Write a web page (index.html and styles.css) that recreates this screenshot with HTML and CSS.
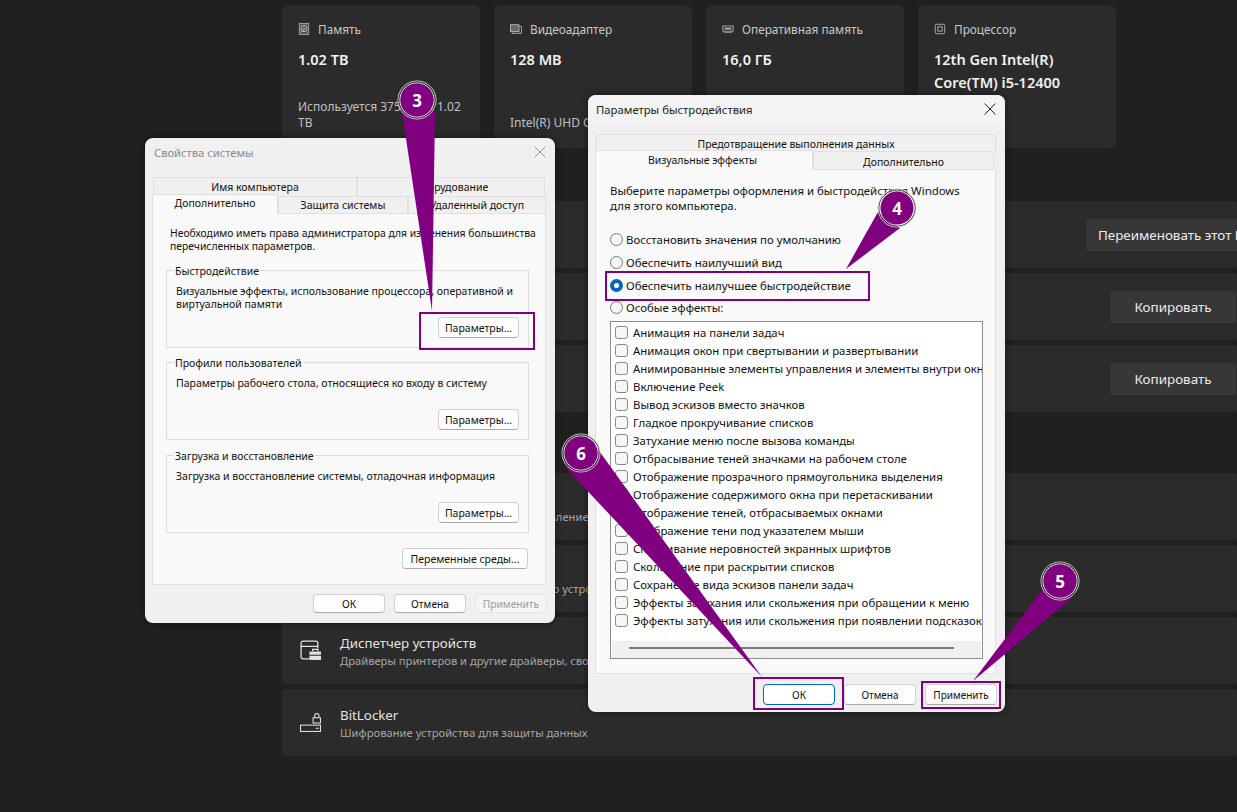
FILE: index.html
```html
<!DOCTYPE html>
<html lang="en">
<head>
    <meta charset="UTF-8">
    <meta name="viewport" content="width=device-width, initial-scale=1.0">
    <title>Параметры быстродействия</title>
    <link rel="stylesheet" href="styles.css">
</head>
<body>
    <div class="page">
        <!-- Spec cards -->
        <div class="cards">
            <div class="card">
                <div class="card-head">
                    <svg class="card-icon" viewBox="0 0 14 14"><rect x="1.5" y="0.5" width="11" height="13" fill="#555" stroke="#aaa"/><circle cx="7" cy="6.5" r="3.6" fill="none" stroke="#ccc"/><circle cx="7" cy="6.5" r="1" fill="#ccc"/><path d="M7 7.5 4 11" stroke="#ccc"/></svg>
                    <span>Память</span>
                </div>
                <div class="card-value">1.02 TB</div>
                <div class="card-sub">Используется 375 ГБ из 1.02 TB</div>
            </div>
            <div class="card">
                <div class="card-head">
                    <svg class="card-icon" viewBox="0 0 14 14"><rect x="0.5" y="2" width="10" height="8" fill="#666" stroke="#bbb"/><path d="M10.5 4h3v8h-11v-2" fill="none" stroke="#bbb"/></svg>
                    <span>Видеоадаптер</span>
                </div>
                <div class="card-value">128 MB</div>
                <div class="card-sub">Intel(R) UHD Graphics 730</div>
            </div>
            <div class="card">
                <div class="card-head">
                    <svg class="card-icon" viewBox="0 0 14 14"><rect x="1" y="3.5" width="12" height="6" fill="none" stroke="#bbb"/><path d="M3 5.5h8v2H3z" fill="#bbb"/><path d="M2 11h10" stroke="#999"/></svg>
                    <span>Оперативная память</span>
                </div>
                <div class="card-value">16,0 ГБ</div>
            </div>
            <div class="card">
                <div class="card-head">
                    <svg class="card-icon" viewBox="0 0 14 14"><rect x="1.5" y="1.5" width="11" height="11" rx="1.5" fill="none" stroke="#bbb"/><rect x="4.5" y="4.5" width="5" height="5" fill="none" stroke="#bbb"/></svg>
                    <span>Процессор</span>
                </div>
                <div class="card-value">12th Gen Intel(R) Core(TM) i5-12400</div>
            </div>
        </div>

        <!-- Device rows -->
        <div class="rows">
            <div class="row"><button class="dark-btn rename-btn">Переименовать этот ПК</button></div>
            <div class="row"><button class="dark-btn">Копировать</button></div>
            <div class="row"><button class="dark-btn">Копировать</button></div>
        </div>

        <!-- Related settings -->
        <div class="rows rows-related">
            <div class="row link-row">
                <div class="row-text">
                    <div class="row-title">Ключ продукта и активация</div>
                    <div class="row-sub row-sub-wide">Изменение ключа продукта или обновление выпуска Windows</div>
                </div>
            </div>
            <div class="row link-row">
                <div class="row-text">
                    <div class="row-title">Удаленный рабочий стол</div>
                    <div class="row-sub">Управление этим устройством с другого устройства</div>
                </div>
            </div>
            <div class="row link-row">
                <svg class="row-icon" viewBox="0 0 20 20"><path d="M9 18H3a2 2 0 0 1-2-2V3a2 2 0 0 1 2-2h12a2 2 0 0 1 2 2v5M1 6h16" fill="none" stroke="#e4e4e4" stroke-width="1.2"/><path d="M9 11h11v8H9z" fill="#e4e4e4"/><path d="M12 11V9h5v2" fill="none" stroke="#e4e4e4" stroke-width="1.2"/><path d="M9 14.5h11" stroke="#2b2b2b"/></svg>
                <div class="row-text">
                    <div class="row-title">Диспетчер устройств</div>
                    <div class="row-sub">Драйверы принтеров и другие драйверы, свойства оборудования</div>
                </div>
            </div>
            <div class="row link-row">
                <svg class="row-icon" viewBox="0 0 20 20"><rect x="0.5" y="12.5" width="19" height="6" fill="none" stroke="#e4e4e4"/><path d="M15 15.5h3" stroke="#e4e4e4"/><rect x="12.5" y="5.5" width="7" height="5" fill="none" stroke="#e4e4e4"/><path d="M14 5.5V3.5a2 2 0 0 1 4 0v2" fill="none" stroke="#e4e4e4"/></svg>
                <div class="row-text">
                    <div class="row-title">BitLocker</div>
                    <div class="row-sub">Шифрование устройства для защиты данных</div>
                </div>
            </div>
        </div>
    </div>

    <!-- Свойства системы -->
    <div class="dialog dialog-system">
        <div class="dialog-title">
            <span>Свойства системы</span>
            <svg class="close" viewBox="0 0 12 12"><path d="M.5.5l11 11M11.5.5l-11 11" stroke="#999" fill="none"/></svg>
        </div>
        <div class="tabs-back">
            <div class="tab tab-name">Имя компьютера</div>
            <div class="tab tab-hardware">Оборудование</div>
        </div>
        <div class="tabs-front">
            <div class="tab tab-active tab-extra">Дополнительно</div>
            <div class="tab tab-protect">Защита системы</div>
            <div class="tab tab-remote">Удаленный доступ</div>
        </div>
        <div class="panel">
            <p class="note">Необходимо иметь права администратора для изменения большинства<br>перечисленных параметров.</p>
            <div class="group">
                <div class="group-title">Быстродействие</div>
                <p>Визуальные эффекты, использование процессора, оперативной и виртуальной памяти</p>
                <button class="btn btn-params">Параметры...</button>
            </div>
            <div class="group">
                <div class="group-title">Профили пользователей</div>
                <p>Параметры рабочего стола, относящиеся ко входу в систему</p>
                <button class="btn btn-params">Параметры...</button>
            </div>
            <div class="group group-last">
                <div class="group-title">Загрузка и восстановление</div>
                <p>Загрузка и восстановление системы, отладочная информация</p>
                <button class="btn btn-params">Параметры...</button>
            </div>
            <button class="btn btn-env">Переменные среды...</button>
        </div>
        <div class="dialog-buttons">
            <button class="btn">ОК</button>
            <button class="btn">Отмена</button>
            <button class="btn btn-disabled">Применить</button>
        </div>
    </div>

    <!-- Параметры быстродействия -->
    <div class="dialog dialog-perf">
        <div class="dialog-title">
            <span>Параметры быстродействия</span>
            <svg class="close" viewBox="0 0 12 12"><path d="M.5.5l11 11M11.5.5l-11 11" stroke="#222" fill="none"/></svg>
        </div>
        <div class="tabs-back">
            <div class="tab tab-dep">Предотвращение выполнения данных</div>
        </div>
        <div class="tabs-front">
            <div class="tab tab-active tab-visual">Визуальные эффекты</div>
            <div class="tab tab-more">Дополнительно</div>
        </div>
        <div class="panel">
            <p class="note">Выберите параметры оформления и быстродействия Windows<br>для этого компьютера.</p>
            <div class="radios">
                <div class="radio-row"><span class="radio"></span>Восстановить значения по умолчанию</div>
                <div class="radio-row"><span class="radio"></span>Обеспечить наилучший вид</div>
                <div class="radio-row"><span class="radio radio-on"></span>Обеспечить наилучшее быстродействие</div>
                <div class="radio-row"><span class="radio"></span>Особые эффекты:</div>
            </div>
            <div class="listbox">
                <div class="list-items">
                    <div class="check-row"><span class="check"></span>Анимация на панели задач</div>
                    <div class="check-row"><span class="check"></span>Анимация окон при свертывании и развертывании</div>
                    <div class="check-row"><span class="check"></span>Анимированные элементы управления и элементы внутри окна</div>
                    <div class="check-row"><span class="check"></span>Включение Peek</div>
                    <div class="check-row"><span class="check"></span>Вывод эскизов вместо значков</div>
                    <div class="check-row"><span class="check"></span>Гладкое прокручивание списков</div>
                    <div class="check-row"><span class="check"></span>Затухание меню после вызова команды</div>
                    <div class="check-row"><span class="check"></span>Отбрасывание теней значками на рабочем столе</div>
                    <div class="check-row"><span class="check"></span>Отображение прозрачного прямоугольника выделения</div>
                    <div class="check-row"><span class="check"></span>Отображение содержимого окна при перетаскивании</div>
                    <div class="check-row"><span class="check"></span>Отображение теней, отбрасываемых окнами</div>
                    <div class="check-row"><span class="check"></span>Отображение тени под указателем мыши</div>
                    <div class="check-row"><span class="check"></span>Сглаживание неровностей экранных шрифтов</div>
                    <div class="check-row"><span class="check"></span>Скольжение при раскрытии списков</div>
                    <div class="check-row"><span class="check"></span>Сохранение вида эскизов панели задач</div>
                    <div class="check-row"><span class="check"></span>Эффекты затухания или скольжения при обращении к меню</div>
                    <div class="check-row"><span class="check"></span>Эффекты затухания или скольжения при появлении подсказок</div>
                </div>
                <div class="hscroll"><div class="hscroll-thumb"></div></div>
            </div>
        </div>
        <div class="dialog-buttons">
            <button class="btn btn-default">ОК</button>
            <button class="btn">Отмена</button>
            <button class="btn">Применить</button>
        </div>
    </div>

    <!-- Step callouts drawn over the screenshot -->
    <svg class="callouts" viewBox="0 0 1237 812">
        <g class="tails">
            <polygon points="402,112 435,112 432,311"/>
            <polygon points="846,269 878,212 900,228"/>
            <polygon points="973,681 1042,590 1074,596"/>
            <polygon points="762,677 566,468 597,448"/>
        </g>
        <g class="frames">
            <rect x="420" y="313" width="114" height="36"/>
            <rect x="606" y="272" width="263" height="28"/>
            <rect x="754" y="678" width="89" height="31"/>
            <rect x="922" y="682" width="78" height="26"/>
        </g>
        <g class="badge"><circle class="ring-a" cx="417" cy="100" r="19"/><circle class="ring-b" cx="417" cy="100" r="18"/><circle class="ring-c" cx="417" cy="100" r="17"/><circle class="disc" cx="417" cy="100" r="16.5"/><text x="417" y="106.5">3</text></g>
        <g class="badge"><circle class="ring-a" cx="897" cy="208" r="19"/><circle class="ring-b" cx="897" cy="208" r="18"/><circle class="ring-c" cx="897" cy="208" r="17"/><circle class="disc" cx="897" cy="208" r="16.5"/><text x="897" y="214.5">4</text></g>
        <g class="badge"><circle class="ring-a" cx="1060" cy="581" r="19"/><circle class="ring-b" cx="1060" cy="581" r="18"/><circle class="ring-c" cx="1060" cy="581" r="17"/><circle class="disc" cx="1060" cy="581" r="16.5"/><text x="1060" y="587.5">5</text></g>
        <g class="badge"><circle class="ring-a" cx="581" cy="453" r="19"/><circle class="ring-b" cx="581" cy="453" r="18"/><circle class="ring-c" cx="581" cy="453" r="17"/><circle class="disc" cx="581" cy="453" r="16.5"/><text x="581" y="459.5">6</text></g>
    </svg>
</body>
</html>
```
FILE: styles.css
```css
html, body {
    margin: 0;
    padding: 0;
    height: 812px;
    overflow: hidden;
    background-color: #202020;
    font-family: "Noto Sans", Arial, sans-serif;
}
button {
    font-family: inherit;
}
p {
    margin: 0;
}
.page {
    padding: 5px 0 0 282px;
}

/* cards */
.cards {
    display: flex;
    gap: 14px;
}
.card {
    display: flex;
    flex-direction: column;
    box-sizing: border-box;
    width: 198px;
    height: 143px;
    padding: 15px 16px 17px;
    background-color: #2b2b2b;
    border-radius: 6px;
}
.card-head {
    display: flex;
    align-items: center;
    gap: 8px;
    font-size: 11.8px;
    line-height: 18px;
    color: #c8c8c8;
}
.card-icon {
    width: 12px;
    height: 12px;
}
.card-value {
    margin-top: 10px;
    font-size: 14.5px;
    font-weight: 600;
    line-height: 23px;
    color: #f2f2f2;
}
.card-sub {
    margin-top: auto;
    font-size: 12px;
    line-height: 16px;
    color: #c0c0c0;
}

/* rows */
.rows {
    display: flex;
    flex-direction: column;
    gap: 5px;
    margin-top: 53px;
}
.rows-related {
    margin-top: 61px;
}
.row {
    display: flex;
    align-items: center;
    justify-content: flex-end;
    box-sizing: border-box;
    height: 67px;
    padding: 0 1px 0 18px;
    background-color: #2b2b2b;
    border-radius: 4px;
}
.dark-btn {
    width: 126px;
    height: 32px;
    padding: 0;
    border: none;
    border-radius: 4px;
    background-color: #373737;
    color: #ececec;
    font-size: 13.4px;
}
.rename-btn {
    width: 190px;
    margin-right: -40px;
    padding-left: 12px;
    text-align: left;
    white-space: nowrap;
}
.link-row {
    justify-content: flex-start;
    gap: 19px;
}
.row-icon {
    width: 21px;
    height: 21px;
    flex: none;
}
.row-text {
    padding-top: 2px;
    white-space: nowrap;
}
.link-row:nth-child(-n+2) .row-text {
    margin-left: 40px;
}
.row-title {
    font-size: 13.3px;
    line-height: 18px;
    color: #e4e4e4;
}
.row-sub {
    font-size: 11.2px;
    line-height: 18px;
    color: #a6a6a6;
}
.row-sub-wide {
    word-spacing: 1.2px;
}

/* dialogs */
.dialog {
    position: absolute;
    box-sizing: border-box;
    background-color: #f0f0f0;
    border-radius: 8px;
    box-shadow: 0 0 6px rgba(0, 0, 0, 0.5);
    color: #111;
    overflow: hidden;
}
.dialog-title {
    display: flex;
    align-items: center;
    justify-content: space-between;
    box-sizing: border-box;
}
.close {
    width: 12px;
    height: 12px;
}
.tabs-back, .tabs-front {
    display: flex;
    position: relative;
}
.tabs-front {
    align-items: flex-end;
}
.tab {
    box-sizing: border-box;
    border: 1px solid #e0e0e0;
    border-bottom: none;
    background-color: #f0f0f0;
    font-size: 10.5px;
    text-align: center;
    white-space: nowrap;
}
.tab-active {
    position: relative;
    z-index: 1;
    background-color: #f9f9f9;
    margin-bottom: -1px;
}
.panel {
    box-sizing: border-box;
    border: 1px solid #e0e0e0;
    background-color: #f9f9f9;
    display: flex;
    flex-direction: column;
}
.note {
    white-space: nowrap;
}
.dialog-buttons {
    display: flex;
    justify-content: flex-end;
    gap: 9px;
    padding-right: 8px;
}
.btn {
    box-sizing: border-box;
    width: 72px;
    height: 19px;
    padding: 0;
    border: 1px solid #d0d0d0;
    border-bottom-color: #aaa;
    border-radius: 4px;
    background-color: #fdfdfd;
    color: #111;
    white-space: nowrap;
}

/* Свойства системы */
.dialog-system {
    left: 145px;
    top: 138px;
    width: 410px;
    height: 485px;
    font-size: 10.5px;
    line-height: 13px;
}
.dialog-system .btn {
    font-size: 10.5px;
}
.dialog-system .dialog-buttons .btn {
    font-size: 10.2px;
}
.dialog-system .dialog-title {
    height: 39px;
    padding: 0 9px 11px 9px;
    font-size: 11.2px;
    color: #8a8a8a;
}
.dialog-system .tabs-back {
    margin-left: 8px;
}
.dialog-system .tabs-back .tab {
    height: 19px;
    line-height: 18px;
}
.tab-name {
    width: 204px;
}
.tab-hardware {
    width: 188px;
}
.dialog-system .tabs-front {
    height: 19px;
    margin: -2px 0 0 7px;
}
.tab-extra {
    width: 126px;
    height: 20px;
    line-height: 17px;
}
.tab-protect {
    width: 130px;
    height: 17px;
    line-height: 17px;
}
.tab-remote {
    width: 138px;
    height: 17px;
    line-height: 17px;
}
.dialog-system .panel {
    width: 394px;
    height: 372px;
    margin-left: 7px;
    padding: 13px 17px 0 13px;
}
.dialog-system .note {
    padding: 0 4px;
    font-size: 10.35px;
}
.group {
    position: relative;
    display: flex;
    flex-direction: column;
    box-sizing: border-box;
    width: 363px;
    height: 78px;
    margin-top: 14px;
    padding: 14px 9px 9px;
    border: 1px solid #dcdcdc;
}
.note + .group {
    margin-top: 17px;
}
.group-last {
    margin-top: 15px;
}
.group-title {
    position: absolute;
    left: 7px;
    top: -6px;
    padding: 0 1px;
    background-color: #f9f9f9;
}
.btn-params {
    width: 81px;
    height: 21px;
    margin-top: auto;
    align-self: flex-end;
}
.dialog-system .btn-env {
    width: 126px;
    height: 21px;
    margin-top: 15px;
    align-self: flex-end;
}
.dialog-system .dialog-buttons {
    margin-top: 9px;
}
.btn-disabled {
    background-color: #f5f5f5;
    border-color: #e6e6e6;
    color: #9c9c9c;
}

/* Параметры быстродействия */
.dialog-perf {
    left: 588px;
    top: 95px;
    width: 417px;
    height: 617px;
    font-size: 11.4px;
    line-height: 15px;
}
.dialog-perf .btn {
    height: 21px;
    font-size: 10px;
}
.dialog-perf .dialog-title {
    height: 30px;
    padding: 0 9px 2px 8px;
    background-color: #f3f3f3;
    font-size: 11.3px;
    color: #222;
}
.dialog-perf .tabs-back {
    margin: 9px 0 0 8px;
}
.tab-dep {
    width: 400px;
    height: 19px;
    line-height: 18px;
}
.dialog-perf .tabs-front {
    height: 18px;
    margin: -2px 0 0 7px;
}
.tab-visual {
    width: 218px;
    height: 20px;
    padding-right: 3px;
    line-height: 18px;
}
.tab-more {
    width: 181px;
    height: 18px;
    line-height: 20px;
}
.dialog-perf .panel {
    width: 401px;
    height: 505px;
    margin-left: 7px;
    padding: 13px 0 0 14px;
}
.radios {
    margin-top: 15.4px;
}
.radio-row {
    display: flex;
    align-items: center;
    gap: 3px;
    height: 22.67px;
}
.radio {
    box-sizing: border-box;
    width: 13px;
    height: 13px;
    border: 1px solid #777;
    border-radius: 50%;
    background-color: #f6f6f6;
}
.radio-on {
    border: 4px solid #0067c0;
    background-color: #fff;
}
.listbox {
    display: flex;
    flex-direction: column;
    box-sizing: border-box;
    width: 373px;
    height: 338px;
    margin-top: 1.6px;
    border: 1px solid #8e8e8e;
    background-color: #fff;
}
.list-items {
    flex: 1;
    overflow: hidden;
    padding-top: 2px;
}
.check-row {
    display: flex;
    align-items: center;
    gap: 5px;
    height: 18px;
    padding-left: 4px;
    white-space: nowrap;
}
.check {
    flex: none;
    box-sizing: border-box;
    width: 13px;
    height: 13px;
    border: 1px solid #8a8a8a;
    border-radius: 3px;
    background-color: #f6f6f6;
}
.hscroll {
    height: 17px;
    margin: 0 1px 0 1px;
    padding: 6px 27px 0 17px;
    box-sizing: border-box;
    background-color: #f0f0f0;
}
.hscroll-thumb {
    height: 2px;
    background-color: #7a7a7a;
}
.dialog-perf .dialog-buttons {
    margin-top: 10px;
}
.btn-default {
    border: 1px solid #0067c0;
    background-color: #fff;
}

/* callouts */
.callouts {
    position: absolute;
    left: 0;
    top: 0;
    width: 1237px;
    height: 812px;
}
.tails polygon {
    fill: #800080;
}
.frames rect {
    fill: none;
    stroke: #800080;
    stroke-width: 2;
}
.badge circle {
    fill: none;
}
.ring-a {
    stroke: #d8d8d8;
}
.ring-b {
    stroke: #3a3a3a;
}
.ring-c {
    stroke: #fff;
}
.badge .disc {
    fill: #800080;
}
.badge text {
    fill: #fff;
    font-family: "Noto Sans", Arial, sans-serif;
    font-size: 17px;
    font-weight: 700;
    text-anchor: middle;
}
```
